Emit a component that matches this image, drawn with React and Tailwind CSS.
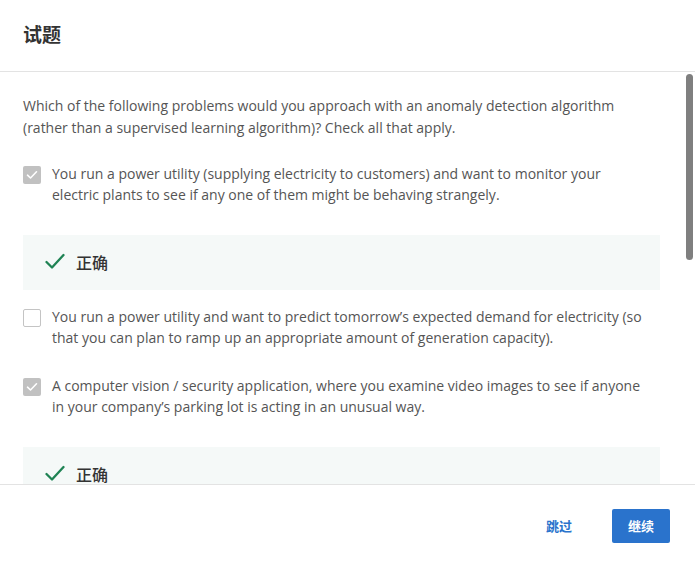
import React from 'react';

const options = [
  {
    text: 'You run a power utility (supplying electricity to customers) and want to monitor your electric plants to see if any one of them might be behaving strangely.',
    checked: true,
    feedback: true,
    gapAfter: 'mb-[16px]',
  },
  {
    text: 'You run a power utility and want to predict tomorrow\u2019s expected demand for electricity (so that you can plan to ramp up an appropriate amount of generation capacity).',
    checked: false,
    feedback: false,
    gapAfter: 'mb-[27px]',
  },
  {
    text: 'A computer vision / security application, where you examine video images to see if anyone in your company\u2019s parking lot is acting in an unusual way.',
    checked: true,
    feedback: true,
    gapAfter: 'mb-[16px]',
  },
];

function CheckBox({ checked }) {
  if (checked) {
    return (
      <div className="mt-[3px] flex h-[18px] w-[18px] shrink-0 items-center justify-center rounded-[2px] bg-[#c1c1c1]">
        <svg width="12" height="10" viewBox="0 0 12 10" fill="none">
          <path d="M1.5 5.2 L4.5 8 L10.5 1.8" stroke="#fff" strokeWidth="1.6" strokeLinecap="round" strokeLinejoin="round" />
        </svg>
      </div>
    );
  }
  return <div className="mt-[3px] h-[18px] w-[18px] shrink-0 rounded-[2px] border-[1.5px] border-[#c4c4c4] bg-white" />;
}

function Feedback() {
  return (
    <div className="mt-[30px] flex h-[55px] items-center gap-[11px] bg-[#f5f9f8] pb-[2px] pl-[22px]">
      <svg width="20" height="17" viewBox="0 0 20 17" fill="none">
        <path d="M1.5 9 L7 14.5 L18.5 2" stroke="#1f8354" strokeWidth="2.3" strokeLinecap="round" strokeLinejoin="round" />
      </svg>
      <span className="font-['Noto_Sans_CJK_SC',sans-serif] text-[16px] font-medium text-[#333]">正确</span>
    </div>
  );
}

export default function App() {
  return (
    <div className="flex h-[567px] w-[695px] flex-col bg-white font-['Open_Sans','Noto_Sans_CJK_SC',sans-serif]">
      {/* Header */}
      <div className="h-[72px] shrink-0 border-b border-[#e3e3e3] px-[23px] pt-[20px]">
        <h2 className="font-['Noto_Sans_CJK_SC',sans-serif] text-[19px] font-bold leading-[28px] text-[#333]">试题</h2>
      </div>

      {/* Body */}
      <div className="relative flex-1 overflow-hidden border-b border-[#e3e3e3]">
        <div className="pl-[23px] pr-[35px] pt-[23px] text-[14px] leading-[22px] text-[#555]">
          <p className="mb-[24px]">
            Which of the following problems would you approach with an anomaly detection algorithm (rather than a supervised learning algorithm)? Check all that apply.
          </p>
          {options.map((o, i) => (
            <div key={i} className={o.gapAfter}>
              <div className="flex gap-[11px] pr-[12px]">
                <CheckBox checked={o.checked} />
                <p className="leading-[21px]">{o.text}</p>
              </div>
              {o.feedback && <Feedback />}
            </div>
          ))}
        </div>
        {/* scrollbar thumb */}
        <div className="absolute right-[2px] top-[2px] h-[186px] w-[7px] rounded-full bg-[#7f7f7f]" />
      </div>

      {/* Footer */}
      <div className="flex h-[82px] shrink-0 items-center justify-end gap-[24px] pr-[25px] font-['Noto_Sans_CJK_SC',sans-serif]">
        <button className="h-[34px] px-[16px] text-[13px] font-bold text-[#2a73cc]">跳过</button>
        <button className="h-[34px] w-[58px] rounded-[2px] bg-[#2a73cc] text-[13px] font-bold text-white">继续</button>
      </div>
    </div>
  );
}
